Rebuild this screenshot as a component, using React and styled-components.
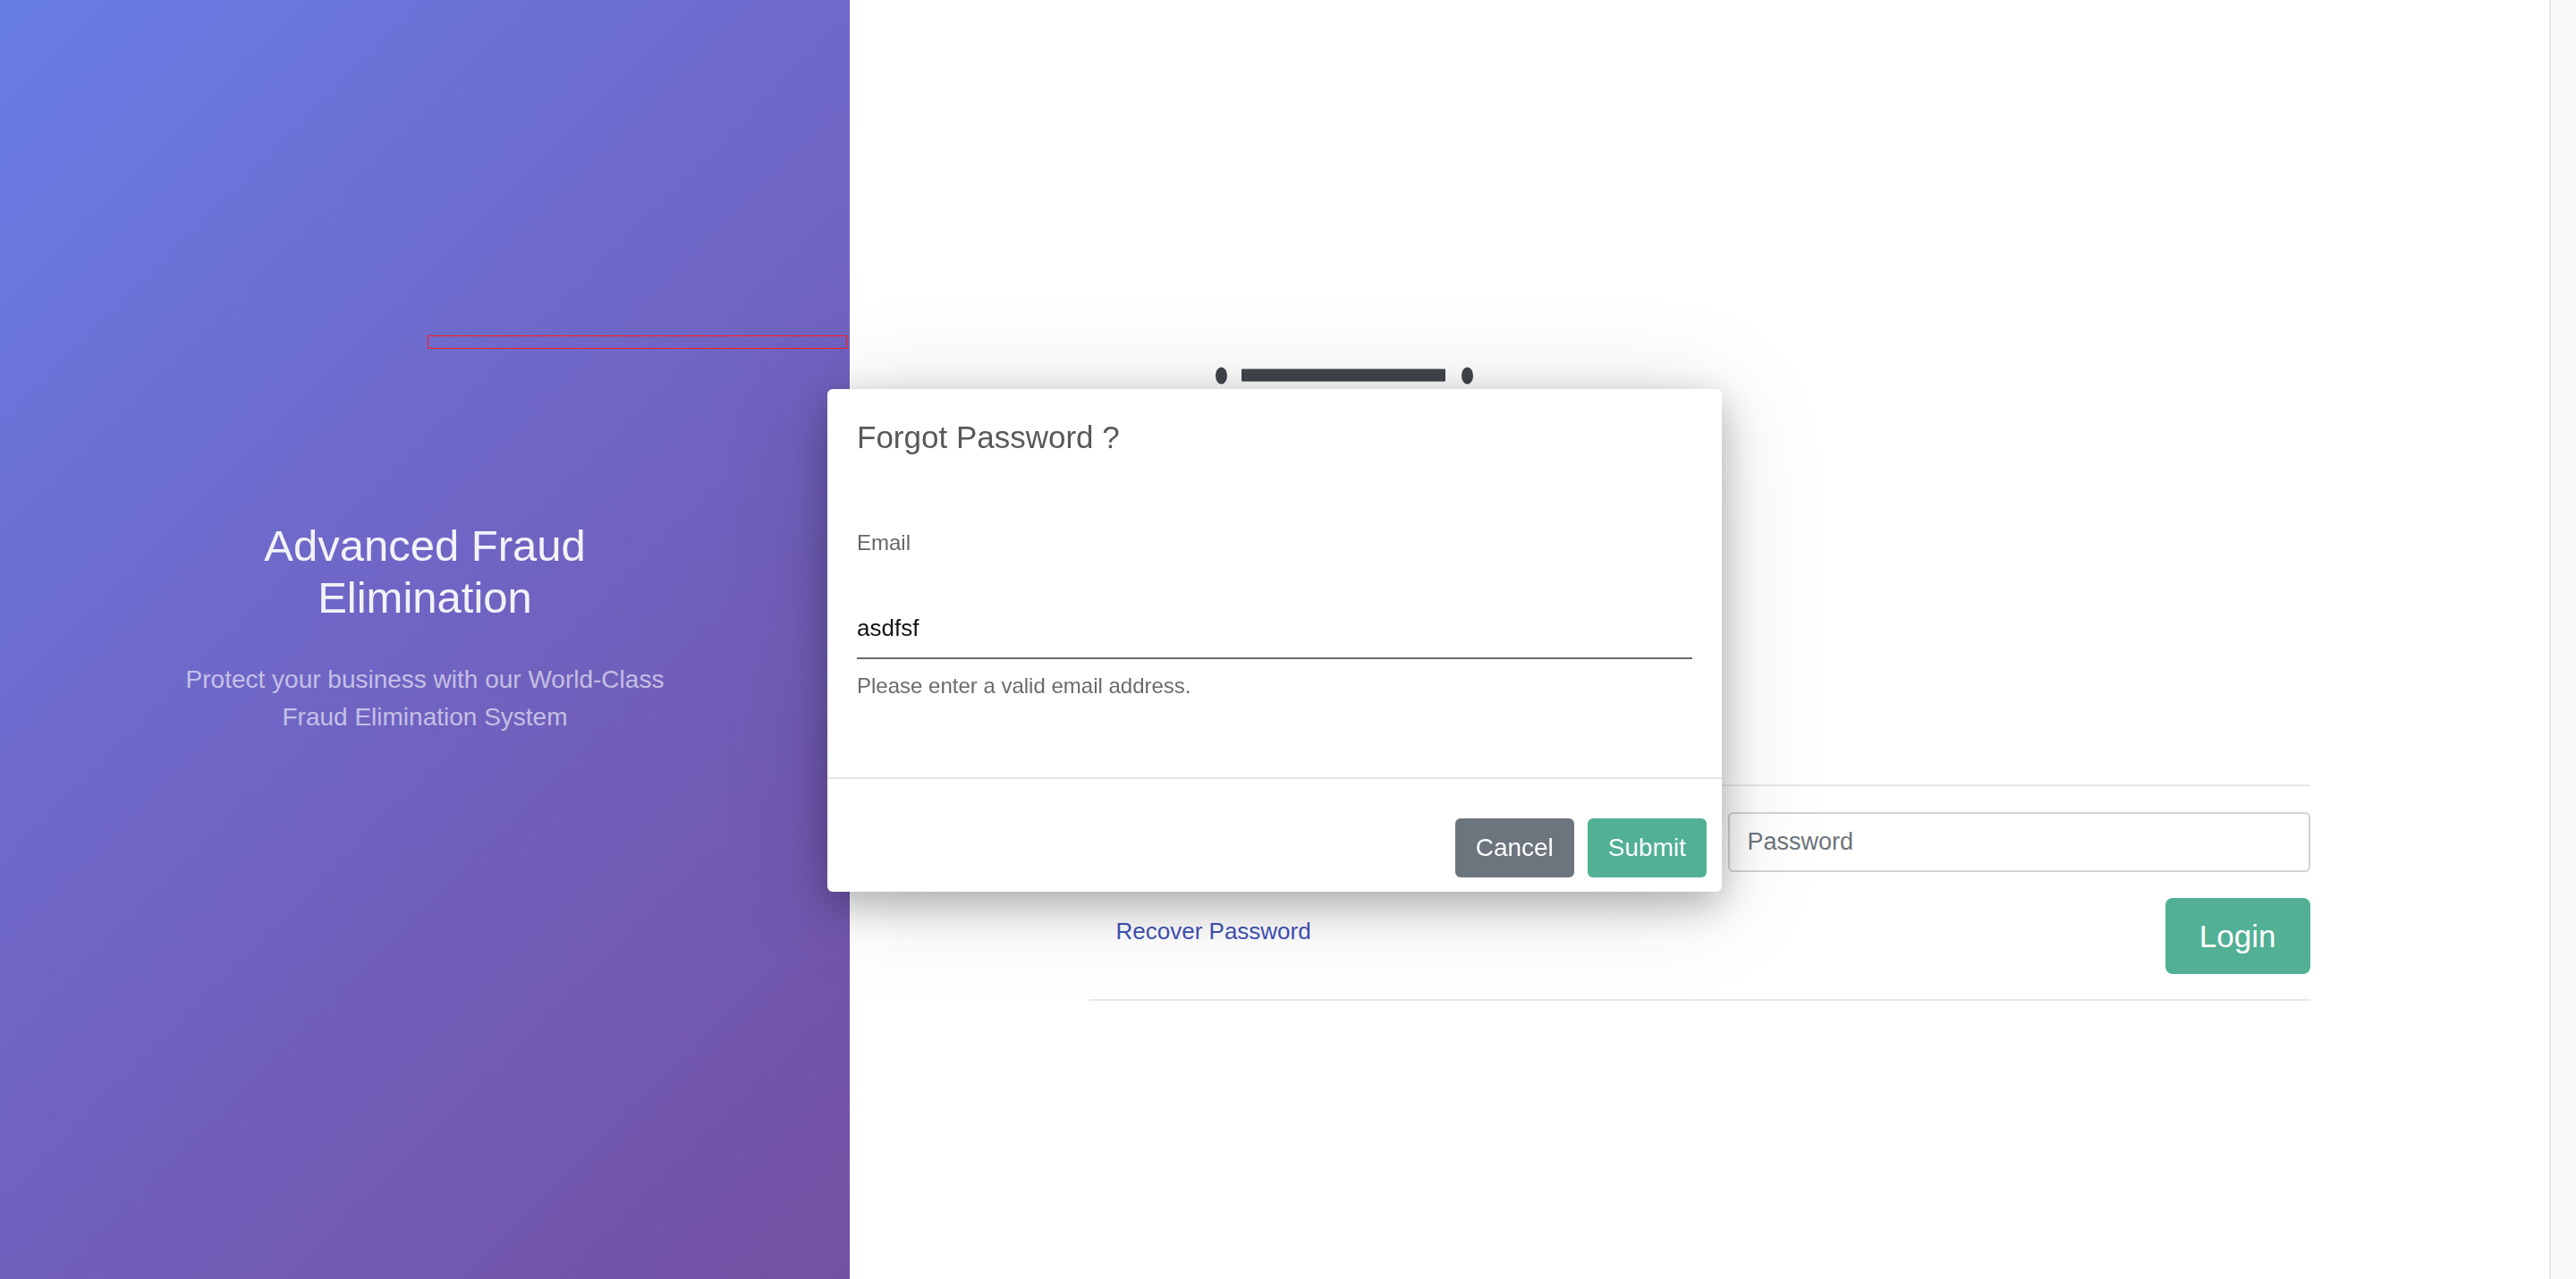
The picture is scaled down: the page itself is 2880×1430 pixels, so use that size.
import React from 'react';
import styled, {createGlobalStyle} from 'styled-components';

const GlobalStyle = createGlobalStyle`
  html, body {
    margin: 0;
    padding: 0;
    overflow: hidden;
  }
  body {
    font-family: "Liberation Sans", Arial, Helvetica, sans-serif;
    background: #ffffff;
  }
  * {
    box-sizing: border-box;
  }
`;

const Page = styled.div`
  display: flex;
  width: 2880px;
  height: 1430px;
`;

/*------
# Hero
----*/

const Hero = styled.section`
  position: relative;
  flex: 0 0 950px;
  display: flex;
  flex-direction: column;
  align-items: center;
  justify-content: center;
  padding-bottom: 26px;
  background: linear-gradient(135deg, #687ee6 0%, #6f66c6 45%, #7350a2 100%);
  text-align: center;
`;

const BrokenFrame = styled.div`
  position: absolute;
  left: 478px;
  top: 375px;
  width: 469px;
  height: 15px;
  border: 1px solid #ff1a1a;
`;

const HeroTitle = styled.h1`
  max-width: 570px;
  margin: 0 0 42px;
  font-size: 49px;
  font-weight: 400;
  line-height: 58px;
  color: #f3f2f8;
`;

const HeroText = styled.p`
  max-width: 570px;
  margin: 0;
  font-size: 28px;
  line-height: 42px;
  color: rgba(255, 255, 255, 0.6);
`;

/*------
# Login
----*/

const Main = styled.main`
  flex: 1;
  display: flex;
  flex-direction: column;
  align-items: center;
  padding-top: 410px;
  background: #ffffff;
`;

const Shell = styled.div`
  width: 1365px;
`;

const LogoRow = styled.div`
  height: 467px;
  padding-left: 140px;
`;

const LoginCard = styled.form`
  border-top: 2px solid #e8e8ec;
  border-bottom: 2px solid #e8e8ec;
  padding: 29px 0 28px;
`;

const FieldRow = styled.div`
  display: grid;
  grid-template-columns: 1fr 651px;
  gap: 16px;
`;

const TextInput = styled.input`
  height: 67px;
  width: 100%;
  padding: 0 20px;
  border: 2px solid #d0d4d9;
  border-radius: 6px;
  font-family: inherit;
  font-size: 27px;
  color: #333;
  background: #fff;
  outline: 0;

  &::placeholder {
    color: #6c757d;
  }
`;

const ActionRow = styled.div`
  display: flex;
  align-items: center;
  justify-content: space-between;
  margin-top: 29px;
`;

const RecoverLink = styled.a`
  padding-left: 30px;
  margin-bottom: 10px;
  font-size: 26px;
  color: #3f51b5;
  text-decoration: none;
`;

const Button = styled.button`
  height: ${(props) => props.$height || 66}px;
  padding: 0 ${(props) => props.$pad || 23}px;
  border: 0;
  border-radius: ${(props) => props.$radius || 6}px;
  font-family: inherit;
  font-size: ${(props) => props.$size || 28}px;
  color: #ffffff;
  background: ${(props) => (props.$variant === 'muted' ? '#6c757d' : '#52b094')};
  cursor: pointer;
`;

const ScrollTrack = styled.div`
  flex: 0 0 30px;
  border-left: 2px solid #e6e6e6;
  background: #f9f9f9;
`;

/*------
# Modal
----*/

const Overlay = styled.div`
  position: fixed;
  top: 1px;
  left: 0;
  right: 30px;
  bottom: 0;
  display: flex;
  align-items: center;
  justify-content: center;
`;

const Dialog = styled.div`
  display: flex;
  flex-direction: column;
  width: 1000px;
  height: 562px;
  border-radius: 6px;
  background: #ffffff;
  box-shadow: 0 14px 45px rgba(0, 0, 0, 0.28), 0 10px 120px rgba(0, 0, 0, 0.13);
`;

const DialogHeader = styled.div`
  padding: 35px 33px 0;
`;

const DialogTitle = styled.h5`
  margin: 0;
  font-size: 35px;
  font-weight: 400;
  line-height: 38px;
  color: #595959;
`;

const DialogBody = styled.div`
  flex: 1;
  padding: 0 33px;
`;

const FieldLabel = styled.label`
  display: block;
  margin-top: 84px;
  font-size: 24px;
  line-height: 29px;
  color: #666666;
`;

const LineInput = styled.input`
  display: block;
  width: 100%;
  height: 56px;
  margin-top: 60px;
  padding: 0 0 10px;
  border: 0;
  border-bottom: 2px solid #6a6a6a;
  font-family: inherit;
  font-size: 26px;
  color: #111111;
  background: transparent;
  outline: 0;
`;

const HelpText = styled.small`
  display: block;
  margin-top: 17px;
  font-size: 24px;
  line-height: 26px;
  color: #6b6b6b;
`;

const DialogFooter = styled.div`
  display: flex;
  justify-content: flex-end;
  gap: 15px;
  padding: 44px 17px 16px;
  border-top: 2px solid #e4e4e4;
`;

const Logo = () => (
  <svg width="292" height="22" viewBox="0 0 292 22">
    <ellipse cx="7.5" cy="10" rx="6.5" ry="9.5" fill="#42464d" />
    <rect x="30" y="2.5" width="228" height="14" rx="1" fill="#42464d" />
    <ellipse cx="282.5" cy="10" rx="6.5" ry="9.5" fill="#42464d" />
  </svg>
);

const App = () => {
  return (
    <>
      <GlobalStyle />
      <Page>
        <Hero>
          <BrokenFrame />
          <HeroTitle>Advanced Fraud Elimination</HeroTitle>
          <HeroText>Protect your business with our World-Class Fraud Elimination System</HeroText>
        </Hero>
        <Main>
          <Shell>
            <LogoRow>
              <Logo />
            </LogoRow>
            <LoginCard onSubmit={(e) => e.preventDefault()}>
              <FieldRow>
                <TextInput type="text" placeholder="Username" />
                <TextInput type="password" placeholder="Password" />
              </FieldRow>
              <ActionRow>
                <RecoverLink href="#">Recover Password</RecoverLink>
                <Button $height={85} $pad={38} $size={35} $radius={8}>Login</Button>
              </ActionRow>
            </LoginCard>
          </Shell>
        </Main>
        <ScrollTrack />
      </Page>
      <Overlay>
        <Dialog>
          <DialogHeader>
            <DialogTitle>Forgot Password ?</DialogTitle>
          </DialogHeader>
          <DialogBody>
            <FieldLabel htmlFor="recover-email">Email</FieldLabel>
            <LineInput id="recover-email" type="text" defaultValue="asdfsf" />
            <HelpText>Please enter a valid email address.</HelpText>
          </DialogBody>
          <DialogFooter>
            <Button $variant="muted">Cancel</Button>
            <Button>Submit</Button>
          </DialogFooter>
        </Dialog>
      </Overlay>
    </>
  );
};

export default App;
